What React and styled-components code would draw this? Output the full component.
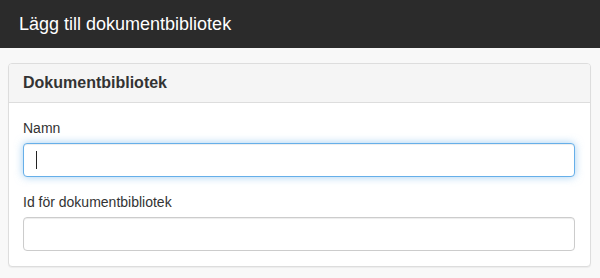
import styled, { createGlobalStyle } from 'styled-components'

const Global = createGlobalStyle`
    body {
        margin: 0;
        background: #f8f8f8;
        font-family: "Liberation Sans", Arial, sans-serif;
        color: #333;
    }
`;

const TopBar = styled.div`
    height: 48px;
    background: #2b2b2b;
    display: flex;
    align-items: center;
    padding: 0 19px;
`;

const Title = styled.h1`
    margin: 0;
    font-size: 18px;
    font-weight: normal;
    color: #fff;
`;

const Page = styled.div`
    padding: 15px 9px 15px 8px;
`;

const Panel = styled.div`
    background: #fff;
    border: 1px solid #ddd;
    border-radius: 4px;
    box-shadow: 0 1px 1px rgba(0, 0, 0, .05);
`;

const PanelHeading = styled.div`
    background: #f5f5f5;
    border-bottom: 1px solid #ddd;
    border-radius: 3px 3px 0 0;
    padding: 10px 14px;
`;

const PanelTitle = styled.h3`
    margin: 0;
    font-size: 16px;
    line-height: 18px;
    font-weight: bold;
    color: #333;
`;

const PanelBody = styled.div`
    padding: 15px 15px 15px 14px;
`;

const FormGroup = styled.div`
    margin-bottom: 15px;
    &:last-child { margin-bottom: 0; }
`;

const Label = styled.label`
    display: block;
    font-size: 14px;
    line-height: 20px;
    margin-bottom: 5px;
`;

const InputWrap = styled.div`
    position: relative;
`;

const Input = styled.input`
    display: block;
    box-sizing: border-box;
    width: 100%;
    height: 34px;
    padding: 6px 12px;
    font: 14px "Liberation Sans", Arial, sans-serif;
    border: 1px solid ${p => p.$focused ? '#66afe9' : '#ccc'};
    border-radius: 4px;
    box-shadow: ${p => p.$focused
        ? 'inset 0 1px 1px rgba(0,0,0,.075), 0 0 8px rgba(102,175,233,.6)'
        : 'inset 0 1px 1px rgba(0,0,0,.075)'};
    outline: none;
    caret-color: transparent;
`;

const Caret = styled.span`
    position: absolute;
    left: 13px;
    top: 8px;
    width: 1px;
    height: 18px;
    background: #222;
`;

const App = () => (
    <>
        <Global />
        <TopBar>
            <Title>Lägg till dokumentbibliotek</Title>
        </TopBar>
        <Page>
            <Panel>
                <PanelHeading>
                    <PanelTitle>Dokumentbibliotek</PanelTitle>
                </PanelHeading>
                <PanelBody>
                    <FormGroup>
                        <Label>Namn</Label>
                        <InputWrap>
                            <Input $focused type="text" />
                            <Caret />
                        </InputWrap>
                    </FormGroup>
                    <FormGroup>
                        <Label>Id för dokumentbibliotek</Label>
                        <Input type="text" />
                    </FormGroup>
                </PanelBody>
            </Panel>
        </Page>
    </>
);

export default App;
